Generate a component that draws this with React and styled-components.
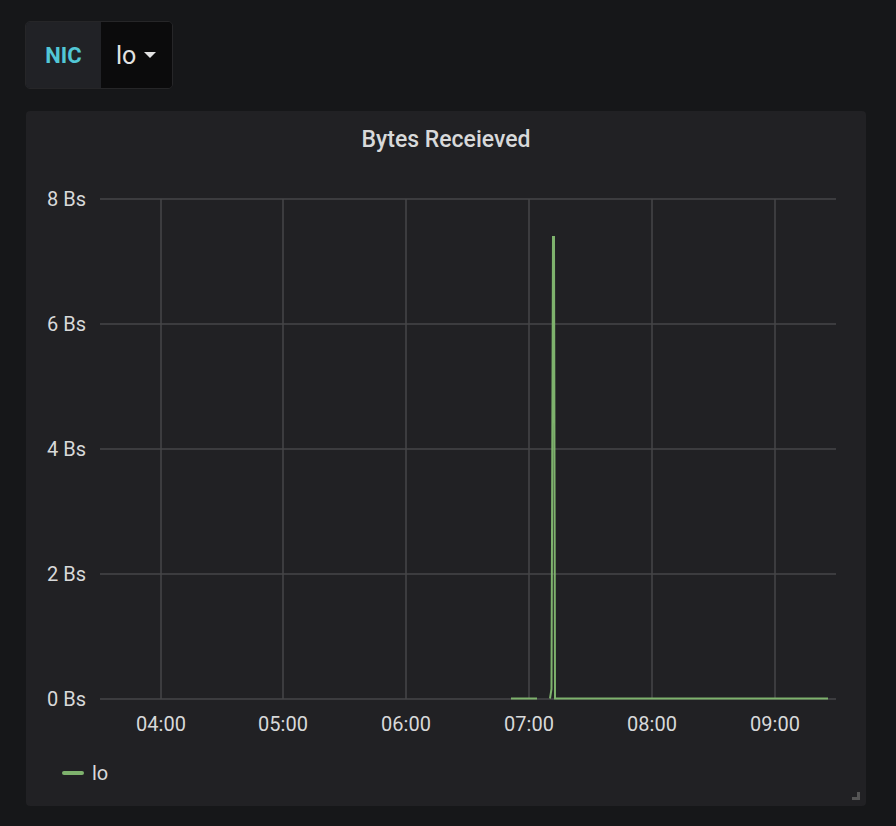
import React from "react";
import styled, { createGlobalStyle } from "styled-components";

const Global = createGlobalStyle`
  body { margin: 0; background: #161719; font-family: Roboto, "Liberation Sans", sans-serif; }
`;

const Page = styled.div`
  width: 896px;
  height: 826px;
  padding: 21px 0 0 25px;
  box-sizing: border-box;
  display: flex;
  flex-direction: column;
  gap: 22px;
`;

const VarBox = styled.div`
  display: flex;
  width: 148px;
  height: 68px;
  border: 1px solid #262628;
  border-radius: 5px;
  overflow: hidden;
  box-sizing: border-box;
`;

const VarLabel = styled.div`
  width: 75px;
  background: #212226;
  color: #52c7d6;
  font-weight: 700;
  font-size: 22px;
  display: flex;
  align-items: center;
  justify-content: center;
`;

const VarSelect = styled.div`
  flex: 1;
  background: #0b0b0c;
  color: #e3e3e3;
  font-size: 25px;
  display: flex;
  align-items: center;
  padding-left: 15px;
  gap: 8px;
`;

const Panel = styled.div`
  position: relative;
  width: 840px;
  height: 695px;
  margin-left: 1px;
  background: #212124;
  border-radius: 4px;
  box-sizing: border-box;
`;

const Title = styled.div`
  text-align: center;
  color: #d8d9da;
  font-size: 23px;
  font-weight: 500;
  padding-top: 15px;
  height: 52px;
  box-sizing: border-box;
`;

const Legend = styled.div`
  display: flex;
  align-items: center;
  gap: 8px;
  padding-left: 36px;
  margin-top: -2px;
  color: #d8d9da;
  font-size: 20px;
`;

const Swatch = styled.span`
  width: 22px;
  height: 4px;
  border-radius: 2px;
  background: #7eb26d;
`;

const Resize = styled.div`
  position: absolute;
  right: 6px;
  bottom: 6px;
  width: 8px;
  height: 8px;
  border-right: 3px solid #555;
  border-bottom: 3px solid #555;
  box-sizing: border-box;
`;

const yTicks = [0, 2, 4, 6, 8];
const xTicks = [
  [161, "04:00"], [283, "05:00"], [406, "06:00"],
  [529, "07:00"], [652, "08:00"], [775, "09:00"],
];
const yOf = (v) => 700 - v * 62.5;

function Chart() {
  return (
    <svg width="840" height="600" viewBox="26 164 840 600" style={{ display: "block" }}>
      {yTicks.map((v) => (
        <g key={v}>
          <line x1="100" x2="836" y1={yOf(v)} y2={yOf(v)} stroke="#464649" strokeWidth="1.5" />
          <text x="86" y={yOf(v) + 7} textAnchor="end" fill="#d8d9da" fontSize="20" fontFamily="Roboto, sans-serif">
            {v} Bs
          </text>
        </g>
      ))}
      {xTicks.map(([x, t]) => (
        <g key={t}>
          <line x1={x} x2={x} y1="200" y2="700" stroke="#464649" strokeWidth="1.5" />
          <text x={x} y="732" textAnchor="middle" fill="#d8d9da" fontSize="20" fontFamily="Roboto, sans-serif">
            {t}
          </text>
        </g>
      ))}
      <polyline points="511,699.5 537,699.5" fill="none" stroke="#7eb26d" strokeWidth="2" />
      <polyline
        points="550,699.5 551.5,690 553,238 554,238 555,699.5 556.5,699.5 828,699.5"
        fill="none" stroke="#7eb26d" strokeWidth="2"
      />
    </svg>
  );
}

export default function App() {
  return (
    <>
      <Global />
      <Page>
        <VarBox>
          <VarLabel>NIC</VarLabel>
          <VarSelect>
            lo
            <svg width="12" height="8" viewBox="0 0 12 8"><path d="M0 1h12L6 7z" fill="#e3e3e3" /></svg>
          </VarSelect>
        </VarBox>
        <Panel>
          <Title>Bytes Receieved</Title>
          <Chart />
          <Legend><Swatch />lo</Legend>
          <Resize />
        </Panel>
      </Page>
    </>
  );
}
